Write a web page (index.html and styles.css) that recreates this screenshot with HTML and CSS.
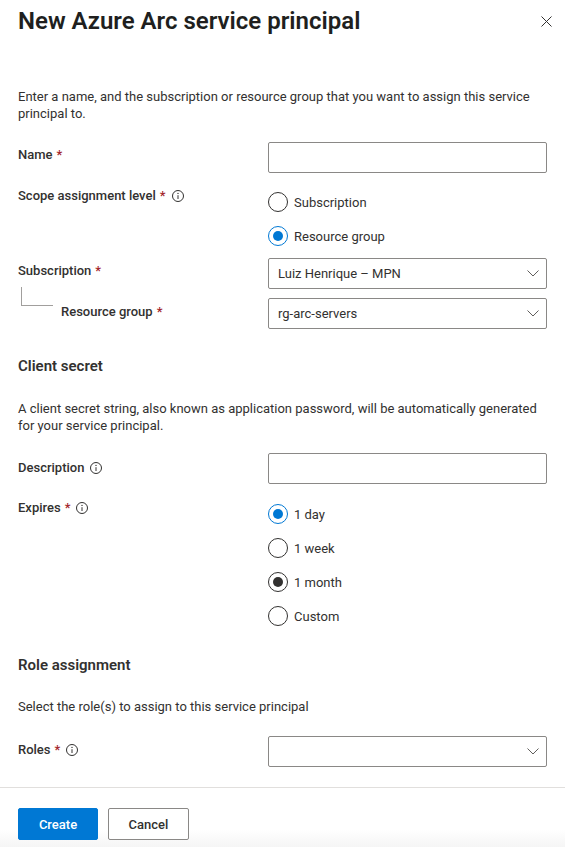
FILE: index.html
```html
<!DOCTYPE html>
<html lang="en">
<head>
<meta charset="utf-8">
<title>New Azure Arc service principal</title>
<link rel="stylesheet" href="styles.css">
</head>
<body>
<div class="panel">
  <header class="head">
    <h1 class="title">New Azure Arc service principal</h1>
    <button class="close" aria-label="Close">
      <svg width="11" height="11" viewBox="0 0 11 11"><path d="M0.5 0.5L10.5 10.5M10.5 0.5L0.5 10.5" stroke="#323130" stroke-width="1" fill="none"/></svg>
    </button>
  </header>

  <div class="body">
    <p class="text intro">Enter a name, and the subscription or resource group that you want to assign this service principal to.</p>

    <div class="row row-name">
      <div class="lbl lbl-input">Name<span class="req">*</span></div>
      <div class="box"></div>
    </div>

    <div class="row row-scope">
      <div class="lbl lbl-radio">Scope assignment level<span class="req">*</span>
        <svg class="info" width="12" height="12" viewBox="0 0 12 12"><circle cx="6" cy="6" r="5.5" fill="none" stroke="#323130" stroke-width="1"/><path d="M6 5.2V9" stroke="#323130" stroke-width="1"/><circle cx="6" cy="3.4" r="0.7" fill="#323130"/></svg>
      </div>
      <div class="radios">
        <div class="radio"><span class="dot"></span>Subscription</div>
        <div class="radio"><span class="dot on"></span>Resource group</div>
      </div>
    </div>

    <div class="row row-sub">
      <div class="lbl lbl-sub">Subscription<span class="req">*</span></div>
      <div class="box select"><span>Luiz Henrique – MPN</span>
        <svg class="chev" width="12" height="7" viewBox="0 0 12 7"><path d="M0.5 0.5L6 6L11.5 0.5" stroke="#605e5c" stroke-width="1" fill="none"/></svg>
      </div>
    </div>

    <div class="row row-rg">
      <div class="lbl lbl-rg"><span class="tree"></span><span>Resource group</span><span class="req">*</span></div>
      <div class="box select"><span>rg-arc-servers</span>
        <svg class="chev" width="12" height="7" viewBox="0 0 12 7"><path d="M0.5 0.5L6 6L11.5 0.5" stroke="#605e5c" stroke-width="1" fill="none"/></svg>
      </div>
    </div>

    <h2 class="section section-secret">Client secret</h2>
    <p class="text desc">A client secret string, also known as application password, will be automatically generated for your service principal.</p>

    <div class="row row-desc">
      <div class="lbl lbl-desc">Description
        <svg class="info" width="12" height="12" viewBox="0 0 12 12"><circle cx="6" cy="6" r="5.5" fill="none" stroke="#323130" stroke-width="1"/><path d="M6 5.2V9" stroke="#323130" stroke-width="1"/><circle cx="6" cy="3.4" r="0.7" fill="#323130"/></svg>
      </div>
      <div class="box"></div>
    </div>

    <div class="row row-exp">
      <div class="lbl lbl-radio">Expires<span class="req">*</span>
        <svg class="info" width="12" height="12" viewBox="0 0 12 12"><circle cx="6" cy="6" r="5.5" fill="none" stroke="#323130" stroke-width="1"/><path d="M6 5.2V9" stroke="#323130" stroke-width="1"/><circle cx="6" cy="3.4" r="0.7" fill="#323130"/></svg>
      </div>
      <div class="radios">
        <div class="radio"><span class="dot on"></span>1 day</div>
        <div class="radio"><span class="dot"></span>1 week</div>
        <div class="radio"><span class="dot dark"></span>1 month</div>
        <div class="radio"><span class="dot"></span>Custom</div>
      </div>
    </div>

    <h2 class="section section-role">Role assignment</h2>
    <p class="text select-text">Select the role(s) to assign to this service principal</p>

    <div class="row row-roles">
      <div class="lbl lbl-roles">Roles<span class="req">*</span>
        <svg class="info" width="12" height="12" viewBox="0 0 12 12"><circle cx="6" cy="6" r="5.5" fill="none" stroke="#323130" stroke-width="1"/><path d="M6 5.2V9" stroke="#323130" stroke-width="1"/><circle cx="6" cy="3.4" r="0.7" fill="#323130"/></svg>
      </div>
      <div class="box select"><span></span>
        <svg class="chev" width="12" height="7" viewBox="0 0 12 7"><path d="M0.5 0.5L6 6L11.5 0.5" stroke="#605e5c" stroke-width="1" fill="none"/></svg>
      </div>
    </div>
  </div>

  <footer class="foot">
    <button class="btn primary">Create</button>
    <button class="btn secondary">Cancel</button>
  </footer>
</div>
</body>
</html>
```

FILE: styles.css
```css
* { box-sizing: border-box; }

html, body {
  margin: 0;
  padding: 0;
  background: #ffffff;
}

body {
  font-family: Roboto, "Liberation Sans", sans-serif;
  font-size: 13px;
  color: #323130;
  width: 565px;
  height: 847px;
  overflow: hidden;
}

.panel {
  display: flex;
  flex-direction: column;
}

.head {
  display: flex;
  align-items: center;
  justify-content: space-between;
  padding: 5px 13px 0 18px;
  height: 37px;
}

.title {
  margin: 0;
  font-size: 24px;
  line-height: 32px;
  font-weight: 600;
  color: #201f1e;
}

.close {
  border: 0;
  background: none;
  padding: 0;
  width: 11px;
  height: 11px;
  display: flex;
}

.body {
  padding: 0 18px;
}

.text {
  margin: 0;
  line-height: 17px;
  font-size: 13px;
}

.intro { margin-top: 51px; }

.row {
  display: grid;
  grid-template-columns: 250px 1fr;
  align-items: start;
}

.lbl {
  font-weight: 500;
  line-height: 20px;
  display: flex;
  align-items: center;
  white-space: nowrap;
}

.req {
  color: #a4262c;
  margin-left: 4px;
}

.info {
  margin-left: 6px;
  flex: none;
}

.box {
  height: 31px;
  border: 1px solid #8a8886;
  border-radius: 2px;
  background: #fff;
}

.select {
  display: flex;
  align-items: center;
  justify-content: space-between;
  padding: 0 7px 0 9px;
}

.chev { flex: none; }

.row-name { margin-top: 20px; }
.lbl-input { padding-top: 3px; }

.row-scope { margin-top: 12px; }
.lbl-radio { padding-top: 1px; }

.radios {
  display: flex;
  flex-direction: column;
}

.radio {
  height: 34px;
  display: flex;
  align-items: center;
}

.dot {
  width: 20px;
  height: 20px;
  border-radius: 50%;
  border: 1px solid #323130;
  margin-right: 6px;
  display: flex;
  align-items: center;
  justify-content: center;
  flex: none;
}

.dot.on { border-color: #0078d4; }
.dot.on::after,
.dot.dark::after {
  content: "";
  width: 10px;
  height: 10px;
  border-radius: 50%;
  background: #0078d4;
}
.dot.dark::after { background: #323130; }

.row-sub { margin-top: 5px; }
.lbl-sub { padding-top: 3px; }

.row-rg { margin-top: 9px; }
.lbl-rg {
  align-items: flex-start;
  padding-top: 4px;
}

.tree {
  width: 32px;
  height: 19px;
  margin: -15px 8px 0 3px;
  border-left: 1px solid #a19f9d;
  border-bottom: 1px solid #a19f9d;
  flex: none;
}

.section {
  margin: 0;
  font-size: 15px;
  line-height: 20px;
  font-weight: 600;
  color: #323130;
}

.section-secret { margin-top: 27px; }
.desc { margin-top: 24px; }

.row-desc { margin-top: 19px; }
.lbl-desc { padding-top: 5px; }

.row-exp { margin-top: 13px; }

.section-role { margin-top: 22px; }
.select-text { margin-top: 23px; }

.row-roles { margin-top: 21px; }
.lbl-roles { padding-top: 4px; }

.foot {
  margin-top: 20px;
  border-top: 1px solid #e1dfdd;
  padding: 20px 18px 0;
  display: flex;
  gap: 10px;
  height: 60px;
  background: linear-gradient(to bottom, #ffffff 70%, #f5f5f5 100%);
}

.btn {
  height: 32px;
  border-radius: 2px;
  font-family: inherit;
  font-size: 13px;
  font-weight: 500;
  padding: 0;
  cursor: pointer;
}

.primary {
  width: 80px;
  background: #0078d4;
  border: 1px solid #0078d4;
  color: #ffffff;
}

.secondary {
  width: 81px;
  background: #ffffff;
  border: 1px solid #8a8886;
  color: #323130;
}
```
